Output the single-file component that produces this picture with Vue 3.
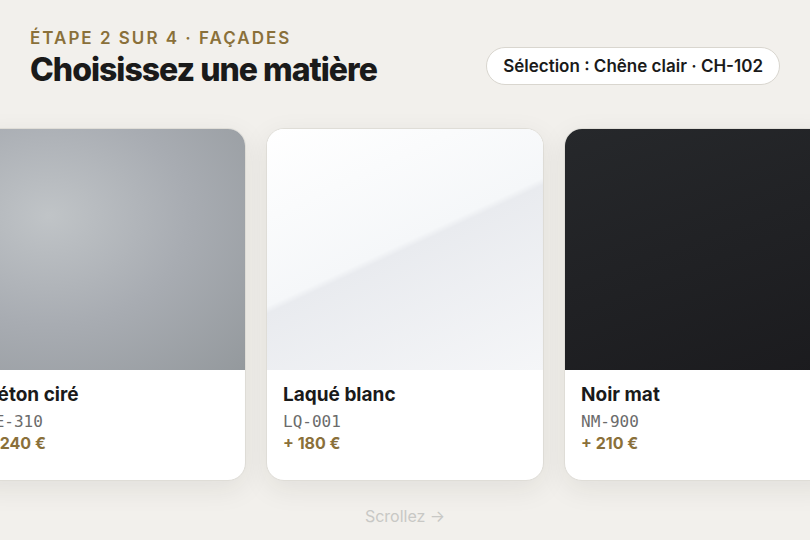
<template>
  <main class="page">
    <header class="header">
      <div class="heading">
        <p class="step">Étape 2 sur 4 · Façades</p>
        <h1 class="title">Choisissez une matière</h1>
      </div>
      <output class="selection">Sélection : Chêne clair · CH-102</output>
    </header>

    <section class="track">
      <button
        v-for="material in materials"
        :key="material.code"
        type="button"
        class="card"
      >
        <span class="swatch" :class="material.texture" />
        <span class="info">
          <span class="name">{{ material.name }}</span>
          <span class="code">{{ material.code }}</span>
          <span class="price">+ {{ material.price }} €</span>
        </span>
      </button>
    </section>

    <p class="hint">Scrollez →</p>
  </main>
</template>

<script setup>
const materials = [
  { name: "Béton ciré", code: "BE-310", price: 240, texture: "concrete" },
  { name: "Laqué blanc", code: "LQ-001", price: 180, texture: "lacquer" },
  { name: "Noir mat", code: "NM-900", price: 210, texture: "black" },
];
</script>

<style>
body {
  margin: 0;
  background: #f2f0ec;
}
</style>

<style scoped>
.page {
  display: flex;
  flex-direction: column;
  min-height: 100vh;
  box-sizing: border-box;
  overflow: hidden;
  background: #f2f0ec;
  color: #1a1a1a;
  font-family: Inter, sans-serif;
  font-size: 16px;
  line-height: 20px;
}

.header {
  display: flex;
  align-items: flex-end;
  justify-content: space-between;
  padding: 28px 30px 0;
}

.step {
  margin: 0;
  color: #8a703a;
  font-size: 17px;
  font-weight: 600;
  line-height: 21px;
  letter-spacing: 2px;
  text-transform: uppercase;
}

.title {
  margin: 0;
  font-size: 32px;
  font-weight: 800;
  line-height: 42px;
  letter-spacing: -1px;
}

.selection {
  padding: 8px 16px;
  border: 1px solid #d9d6cf;
  border-radius: 20px;
  background: #fff;
  font-size: 17px;
  font-weight: 600;
  margin-bottom: 6px;
}

/* The row is wider than the window: the middle card stays centred */
.track {
  display: flex;
  justify-content: center;
  gap: 20px;
  padding: 37px 0 25px;
}

.card {
  display: flex;
  flex-direction: column;
  flex: none;
  width: 278px;
  padding: 0;
  overflow: hidden;
  border: 1px solid #dfddd7;
  border-radius: 18px;
  background: #fff;
  box-shadow: 0 8px 28px rgba(40, 36, 20, 0.08);
  color: inherit;
  font: inherit;
  text-align: left;
  cursor: pointer;
}

.swatch {
  height: 241px;
}

.concrete {
  background: radial-gradient(ellipse at 29% 36%, #c0c4c7, #a8acb2 50%, #94999d);
}

.lacquer {
  background: linear-gradient(155deg, #fff, #f5f7f9 48%, #e9ebef 50%, #f5f6f8);
}

.black {
  background: linear-gradient(160deg, #26282b, #1b1b1e);
}

.info {
  display: flex;
  flex-direction: column;
  padding: 13px 16px 26px;
}

.name {
  margin-bottom: 4px;
  font-size: 19px;
  font-weight: 700;
  line-height: 24px;
}

.code {
  color: #6b6b6b;
  font-family: "DejaVu Sans Mono", monospace;
  line-height: 22px;
}

.price {
  color: #8a703a;
  font-weight: 700;
  line-height: 21px;
}

.hint {
  margin: 0;
  color: #c8c8c5;
  text-align: center;
}
</style>
